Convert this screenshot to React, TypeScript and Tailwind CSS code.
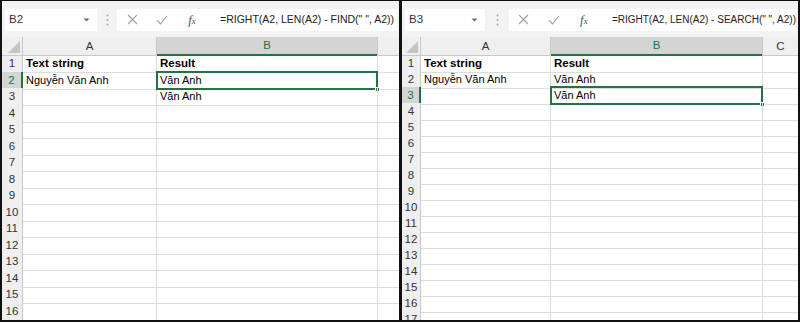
import React from "react";

type Row = { a?: string; b?: string; bold?: boolean };

type PanelProps = {
  name: string;
  formula: string;
  formulaSize: string;
  cols: string;
  rowH: string;
  rowCount: number;
  selRow: number;
  rows: Record<number, Row>;
  nameW: string;
  gapW: string;
  showC: boolean;
  panelClass: string;
};

function Caret() {
  return (
    <svg width="7" height="4" viewBox="0 0 7 4">
      <path d="M0.5 0.5 L3.5 3.5 L6.5 0.5 Z" fill="#6b6b6b" />
    </svg>
  );
}

function Dots() {
  return (
    <svg width="3" height="12" viewBox="0 0 3 12">
      <circle cx="1.5" cy="1.5" r="1" fill="#a8a8a8" />
      <circle cx="1.5" cy="6" r="1" fill="#a8a8a8" />
      <circle cx="1.5" cy="10.5" r="1" fill="#a8a8a8" />
    </svg>
  );
}

function Corner() {
  return (
    <svg width="12" height="12" viewBox="0 0 12 12" className="absolute right-[2px] bottom-[2px]">
      <polygon points="12,0 12,12 0,12" fill="#c4c4c4" />
    </svg>
  );
}

function FormulaBar({
  name,
  formula,
  formulaSize,
  nameW,
  gapW,
}: {
  name: string;
  formula: string;
  formulaSize: string;
  nameW: string;
  gapW: string;
}) {
  return (
    <div className="flex h-[35px] shrink-0 items-center bg-[#f3f3f3] pl-[3px] pr-[2px] pt-[2px]">
      <div className={`flex h-[22px] ${nameW} items-center justify-between bg-white pl-[4px] pr-[7px] text-[11.5px] text-[#333]`}>
        <span>{name}</span>
        <Caret />
      </div>
      <div className={`flex ${gapW} justify-center`}>
        <Dots />
      </div>
      <div className="flex h-[22px] flex-1 items-center bg-white">
        <div className="flex w-[30px] justify-center">
          <svg width="11" height="11" viewBox="0 0 11 11">
            <path d="M1 1 L10 10 M10 1 L1 10" stroke="#a0a0a0" strokeWidth="1.1" />
          </svg>
        </div>
        <div className="flex w-[30px] justify-center">
          <svg width="12" height="10" viewBox="0 0 12 10">
            <path d="M1 5.5 L4.5 9 L11 1" stroke="#a0a0a0" strokeWidth="1.1" fill="none" />
          </svg>
        </div>
        <div className="flex w-[30px] justify-center font-['Liberation_Serif',serif] text-[13px] italic text-[#555]">
          <span>
            f<span className="text-[9px]">x</span>
          </span>
        </div>
        <span className={`pl-[13px] ${formulaSize} text-[#222] whitespace-nowrap`}>{formula}</span>
      </div>
    </div>
  );
}

function Panel(p: PanelProps) {
  const nums = Array.from({ length: p.rowCount }, (_, i) => i + 1);
  return (
    <div className={`flex h-[322px] w-[400px] flex-col overflow-hidden border-[#111] bg-white ${p.panelClass}`}>
      <FormulaBar name={p.name} formula={p.formula} formulaSize={p.formulaSize} nameW={p.nameW} gapW={p.gapW} />
      <div className="h-[1px] shrink-0 bg-[#f3f3f3]" />
      {/* column headers */}
      <div className={`grid ${p.cols} h-[18px] shrink-0 text-[11.5px] text-[#333]`}>
        <div className="relative border-r border-b border-[#c8c8c8] bg-[#efefef]">
          <Corner />
        </div>
        <div className="flex items-center justify-center border-r border-b border-[#c8c8c8] bg-[#efefef]">A</div>
        <div className="flex items-center justify-center border-r border-b-2 border-[#c8c8c8] border-b-[#217346] bg-[#d4d4d4] text-[#217346]">
          B
        </div>
        <div className="flex items-center justify-center border-b border-[#c8c8c8] bg-[#efefef]">{p.showC ? "C" : ""}</div>
      </div>
      {nums.map((n) => {
        const r = p.rows[n] || {};
        const sel = n === p.selRow;
        return (
          <div key={n} className={`grid ${p.cols} ${p.rowH} shrink-0 text-[11px] text-black`}>
            <div
              className={
                sel
                  ? "flex items-center justify-center border-r-2 border-b border-[#c8c8c8] border-r-[#217346] bg-[#d4d4d4] text-[11.5px] text-[#217346]"
                  : "flex items-center justify-center border-r border-b border-[#c8c8c8] bg-[#efefef] text-[11.5px] text-[#333]"
              }
            >
              {n}
            </div>
            <div className={`flex items-center border-r border-b border-[#dcdcdc] pl-[3px] whitespace-nowrap ${r.bold ? "font-bold text-[11.5px]" : ""}`}>
              {r.a}
            </div>
            <div className={`relative flex items-center border-r border-b border-[#dcdcdc] pl-[3px] whitespace-nowrap ${r.bold ? "font-bold text-[11.5px]" : ""}`}>
              {r.b}
              {sel && (
                <div className="absolute -top-[1px] -left-[1px] -right-[1px] -bottom-[1px] border-2 border-[#217346]">
                  <div className="absolute -right-[4px] -bottom-[4px] h-[5px] w-[5px] border border-white bg-[#217346]" />
                </div>
              )}
            </div>
            <div className="border-b border-[#dcdcdc]" />
          </div>
        );
      })}
    </div>
  );
}

const data: Record<number, Row> = {
  1: { a: "Text string", b: "Result", bold: true },
  2: { a: "Nguyễn Văn Anh", b: "Văn Anh" },
  3: { b: "Văn Anh" },
};

export default function App() {
  return (
    <div className="flex h-[323px] w-[800px] bg-white font-['Liberation_Sans',Arial,sans-serif]">
      <Panel
        name="B2"
        formula={'=RIGHT(A2, LEN(A2) - FIND(" ", A2))'}
        formulaSize="text-[10.5px]"
        cols="grid-cols-[21px_134px_221px_1fr]"
        rowH="h-[16.5px]"
        rowCount={16}
        selRow={2}
        rows={data}
        nameW="w-[92px]"
        gapW="w-[20px]"
        showC={false}
        panelClass="border-l-2 border-t border-r border-b-2"
      />
      <Panel
        name="B3"
        formula={'=RIGHT(A2, LEN(A2) - SEARCH(" ", A2))'}
        formulaSize="text-[10px]"
        cols="grid-cols-[19px_130px_212px_1fr]"
        rowH="h-[16px]"
        rowCount={17}
        selRow={3}
        rows={data}
        nameW="w-[82px]"
        gapW="w-[24px]"
        showC={true}
        panelClass="border-l-2 border-t border-r-2 border-b-2"
      />
    </div>
  );
}
